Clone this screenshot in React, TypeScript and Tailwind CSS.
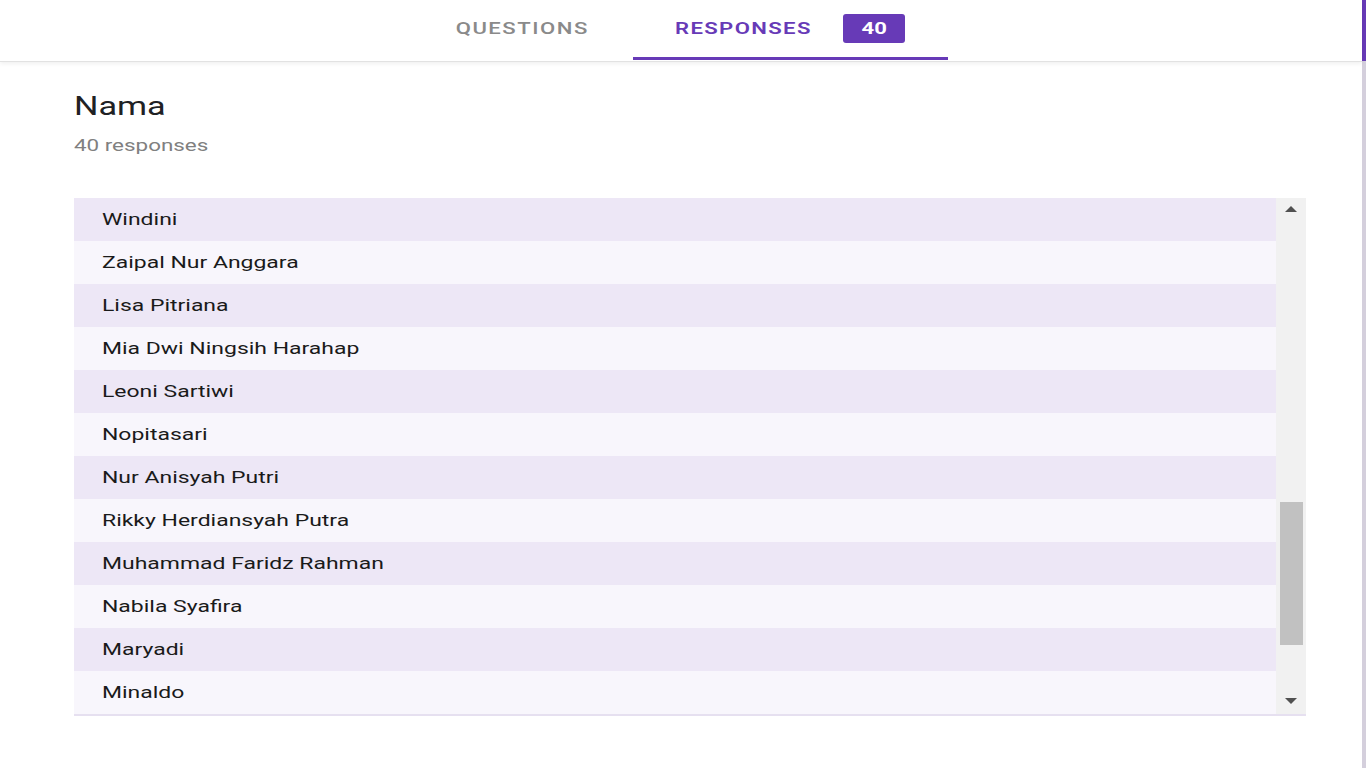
const names = [
  "Windini",
  "Zaipal Nur Anggara",
  "Lisa Pitriana",
  "Mia Dwi Ningsih Harahap",
  "Leoni Sartiwi",
  "Nopitasari",
  "Nur Anisyah Putri",
  "Rikky Herdiansyah Putra",
  "Muhammad Faridz Rahman",
  "Nabila Syafira",
  "Maryadi",
  "Minaldo",
];

function Header() {
  return (
    <div className="relative h-[62px] w-full border-b border-[#e2e2e2] bg-white shadow-[0_2px_4px_rgba(0,0,0,0.06)]">
      <div className="flex h-full items-stretch justify-center pr-[2px]">
        <div className="flex w-[221px] items-center justify-center pb-[4px]">
          <span className="inline-block origin-center scale-x-[1.38] text-[16px] font-medium tracking-[1.1px] text-[#8a8a8a]">
            QUESTIONS
          </span>
        </div>
        <div className="relative flex w-[315px] items-center pb-[4px] pl-[42px]">
          <span className="inline-block w-[138px] origin-left scale-x-[1.38] text-[16px] font-semibold tracking-[1px] text-[#673ab7]">
            RESPONSES
          </span>
          <span className="ml-[30px] flex h-[29px] w-[62px] items-center justify-center rounded-[3px] bg-[#673ab7]">
            <span className="inline-block scale-x-[1.38] text-[16px] font-bold text-white">40</span>
          </span>
          <div className="absolute bottom-[1px] left-0 right-0 h-[3px] bg-[#673ab7]" />
        </div>
      </div>
    </div>
  );
}

function Scrollbar() {
  return (
    <div className="flex w-[30px] flex-col items-center bg-[#f1f1f1]">
      <div className="flex h-[20px] w-full items-center justify-center pt-[2px]">
        <svg width="12" height="6" viewBox="0 0 12 6">
          <path d="M0 6 L6 0 L12 6 Z" fill="#505050" />
        </svg>
      </div>
      <div className="h-[284px]" />
      <div className="h-[143px] w-[23px] bg-[#c1c1c1]" />
      <div className="flex-1" />
      <div className="flex h-[22px] w-full items-center justify-center pb-[4px]">
        <svg width="12" height="6" viewBox="0 0 12 6">
          <path d="M0 0 L12 0 L6 6 Z" fill="#505050" />
        </svg>
      </div>
    </div>
  );
}

export default function App() {
  return (
    <div
      className="flex h-[768px] w-full overflow-hidden bg-white"
      style={{ fontFamily: "Roboto, 'Liberation Sans', sans-serif" }}
    >
      <div className="flex min-w-0 flex-1 flex-col">
        <Header />
        <div className="pl-[74px] pr-[56px] pt-[28px]">
          <div className="h-[34px]">
            <span className="inline-block origin-left scale-x-[1.37] text-[25px] leading-[34px] text-[#202124]">
              Nama
            </span>
          </div>
          <div className="mt-[10px] h-[24px]">
            <span className="inline-block origin-left scale-x-[1.4] text-[16px] leading-[24px] text-[#808080]">
              40 responses
            </span>
          </div>
          <div className="mt-[40px] flex border-b-2 border-[#e6e0f0]">
            <div className="flex-1">
              {names.map((name, i) => (
                <div
                  key={name}
                  className={`flex h-[43px] items-center pl-[28px] ${
                    i % 2 === 0 ? "bg-[#ede7f6]" : "bg-[#f8f6fc]"
                  }`}
                >
                  <span className="inline-block origin-left scale-x-[1.35] text-[17px] text-[#1a1a1a]">
                    {name}
                  </span>
                </div>
              ))}
            </div>
            <Scrollbar />
          </div>
        </div>
      </div>
      <div className="flex w-[4px] flex-col">
        <div className="h-[61px] bg-[#673ab7]" />
        <div className="flex-1 bg-[#d4cfdc]" />
      </div>
    </div>
  );
}
